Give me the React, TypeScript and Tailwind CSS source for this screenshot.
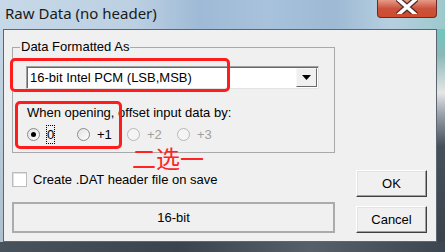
import React from 'react';

const sans = { fontFamily: '"Liberation Sans", Arial, sans-serif' };

const radios = [
  { label: '0', checked: true, disabled: false, focus: true },
  { label: '+1', checked: false, disabled: false, focus: false },
  { label: '+2', checked: false, disabled: true, focus: false },
  { label: '+3', checked: false, disabled: true, focus: false },
];

const Radio = ({ checked, disabled }: { checked: boolean; disabled: boolean }) => (
  <div
    className={`w-[13px] h-[13px] rounded-full border flex items-center justify-center ${
      disabled
        ? 'border-[#b8b8b8] bg-[#f4f4f4]'
        : 'border-[#8a8a8a] bg-gradient-to-br from-[#e2e2e2] to-white'
    }`}
  >
    {checked && <div className="w-[5px] h-[5px] rounded-full bg-black" />}
  </div>
);

const App = () => {
  return (
    <div className="relative w-[445px] h-[252px] overflow-hidden flex flex-col text-[13px] text-black" style={sans}>
      {/* Title bar */}
      <div className="h-[29px] flex items-start justify-between bg-[linear-gradient(90deg,#c7d9e8_0%,#bcd0e2_30%,#9fbad6_45%,#a8c2dc_60%,#9db9d4_75%,#b6cfe0_88%,#9cc9cc_100%)]">
        <div
          className="pl-[5px] pt-[3px] text-[15px] leading-[20px] text-[#1a1a1a]"
          style={{ fontFamily: '"Noto Sans", "Open Sans", sans-serif' }}
        >
          Raw Data (no header)
        </div>
        <div className="mr-[8px] w-[60px] h-[18px] rounded-b-[4px] border border-t-0 border-[#6b2a24] bg-gradient-to-b from-[#e79a88] via-[#c9533c] to-[#d04a2c] flex items-start justify-center">
          <svg width="22" height="14" viewBox="0 0 22 14">
            <path d="M3 0 L19 14 M19 0 L3 14" stroke="#4a2a28" strokeWidth="6" strokeLinecap="square" />
            <path d="M3 0 L19 14 M19 0 L3 14" stroke="#ffffff" strokeWidth="3.5" strokeLinecap="square" />
          </svg>
        </div>
      </div>

      {/* Middle: frame strips + client */}
      <div className="h-[213px] flex">
        <div className="w-[3px] bg-gradient-to-b from-[#c5d6e6] to-[#aebfce]" />
        <div className="w-[434px] border border-[#5c6670] bg-[#f0f0f0] flex">
          {/* Left column */}
          <div className="ml-[8px] w-[323px] flex flex-col">
            <div className="relative mt-[17px] h-[106px] border border-[#a9a9a9]">
              <span className="absolute -top-[9px] left-[7px] bg-[#f0f0f0] px-[1px] leading-[15px]">
                Data Formatted As
              </span>
              <div className="mt-[18px] ml-[13px] w-[293px] h-[23px] bg-white border border-t-[#a0a0a0] border-l-[#a0a0a0] border-r-[#e3e3e3] border-b-[#e3e3e3] shadow-[inset_1px_1px_0_#696969] flex items-center">
                <span className="flex-1 pl-[3px] leading-[15px]">16-bit Intel PCM (LSB,MSB)</span>
                <div className="w-[21px] h-[19px] mr-[1px] bg-[#f0f0f0] border border-t-[#f8f8f8] border-l-[#f8f8f8] border-r-[#696969] border-b-[#696969] flex items-center justify-center">
                  <svg width="9" height="5" viewBox="0 0 9 5">
                    <path d="M0 0 H9 L4.5 5 Z" fill="#000" />
                  </svg>
                </div>
              </div>
              <div className="mt-[16px] ml-[14px] leading-[15px]">When opening, offset input data by:</div>
              <div className="mt-[5px] ml-[14px] h-[18px] flex items-center">
                {radios.map((r, i) => (
                  <div key={i} className="w-[50px] flex items-center">
                    <Radio checked={r.checked} disabled={r.disabled} />
                    <span
                      className={`ml-[6px] leading-[15px] ${r.disabled ? 'text-[#a0a0a0]' : ''} ${
                        r.focus ? 'border border-dotted border-black px-[0px] py-[1px]' : 'ml-[7px]'
                      }`}
                    >
                      {r.label}
                    </span>
                  </div>
                ))}
              </div>
            </div>

            <div className="mt-[19px] flex items-center">
              <div className="w-[15px] h-[15px] bg-white border border-[#bcbcbc] shadow-[inset_1px_1px_0_#e0e0e0]" />
              <span className="ml-[6px] leading-[15px]">Create .DAT header file on save</span>
            </div>

            <div className="mt-[15px] h-[31px] border-2 border-[#ababab] flex items-center justify-center">
              <span className="leading-[15px]">16-bit</span>
            </div>
          </div>

          {/* Right column */}
          <div className="ml-[21px] w-[71px] flex flex-col">
            <button className="mt-[140px] h-[27px] bg-[#f0f0f0] border border-t-[#ffffff] border-l-[#ffffff] border-r-[#404040] border-b-[#404040] shadow-[inset_-1px_-1px_0_#a0a0a0,inset_1px_1px_0_#e3e3e3]">
              OK
            </button>
            <button className="mt-[9px] h-[27px] bg-[#f0f0f0] border border-t-[#ffffff] border-l-[#ffffff] border-r-[#404040] border-b-[#404040] shadow-[inset_-1px_-1px_0_#a0a0a0,inset_1px_1px_0_#e3e3e3]">
              Cancel
            </button>
          </div>
        </div>
        <div className="flex-1 bg-[linear-gradient(180deg,#6fc7bd_0%,#8ab8b8_12%,#e6e6e6_30%,#9aa2aa_40%,#46505a_55%,#3a434c_100%)]" />
      </div>

      {/* Bottom frame */}
      <div className="flex-1 bg-[linear-gradient(90deg,#48525c_0%,#3a444e_40%,#56606a_70%,#3c4650_100%)]" />

      {/* Red annotations */}
      <div className="absolute left-[10px] top-[58px] w-[220px] h-[34px] border-[3px] border-[#ff1c1c] rounded-[5px]" />
      <div className="absolute left-[15px] top-[101px] w-[107px] h-[48px] border-[3px] border-[#ff1c1c] rounded-[5px]" />
      <div
        className="absolute left-[132px] top-[147px] h-[22px] text-[24px] leading-[22px] text-[#ff2323]"
        style={{ fontFamily: '"Noto Sans CJK SC", sans-serif' }}
      >
        二选一
      </div>
    </div>
  );
};

export default App;
